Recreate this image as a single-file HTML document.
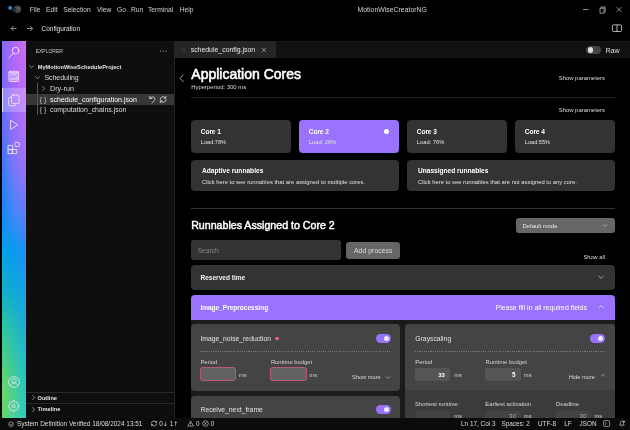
<!DOCTYPE html>
<html><head><meta charset="utf-8"><title>MotionWiseCreatorNG</title>
<style>
html,body{margin:0;padding:0;background:#000;}
body{width:630px;height:430px;position:relative;overflow:hidden;will-change:transform;font-family:"Liberation Sans",sans-serif;}
.b{position:absolute;display:block;}
.ar{font-family:'DejaVu Sans',sans-serif;font-size:0.95em;}
.t{position:absolute;white-space:nowrap;line-height:1;transform-origin:0 50%;}
</style></head><body>
<div class="b" style="left:0.00px;top:0.00px;width:630.00px;height:430.00px;background:#000;"></div>
<div class="b" style="left:25.50px;top:40.60px;width:148.50px;height:377.40px;background:#0e0e0e;"></div>
<div class="b" style="left:174.00px;top:40.60px;width:1.00px;height:377.40px;background:#232323;"></div>
<div class="b" style="left:175.00px;top:40.60px;width:455.00px;height:17.90px;background:#111;box-shadow:inset 0 0.6px 0 #1c1c1c, inset 0 -0.6px 0 #1c1c1c;"></div>
<div class="b" style="left:175.00px;top:40.60px;width:100.70px;height:17.90px;background:#262626;"></div>
<div class="b" style="left:2.00px;top:40.60px;width:23.50px;height:377.10px;background:linear-gradient(180deg,#ac68f4 0.1%,#b068fa 6.5%,#9070f8 25.3%,#7a78f8 33.8%,#4a86fa 44.4%,#0a98f0 55.5%,#10a8d8 66.1%,#28bcb8 76.7%,#3cc8a0 86.0%,#48d090 93.7%,#48d098 99.8%);"></div>
<div class="b" style="left:2.00px;top:40.60px;width:23.50px;height:377.10px;background:linear-gradient(180deg,#d06cf2 0.1%,#c86af8 6.5%,#b070ff 25.3%,#9a70ff 33.8%,#6a78ff 44.4%,#2090f8 55.5%,#18a0e8 66.1%,#1cb0d4 76.7%,#20c0c8 86.0%,#2cc8c0 93.7%,#2cccc0 99.8%);-webkit-mask-image:linear-gradient(90deg,transparent 50%,#000 96%);mask-image:linear-gradient(90deg,transparent 50%,#000 96%);"></div>
<div class="b" style="left:2.00px;top:40.60px;width:23.50px;height:377.10px;background:linear-gradient(180deg,#8868f8 0.1%,#8868fa 6.5%,#5a70f8 25.3%,#3a7cf8 33.8%,#1a84f4 44.4%,#02a0e8 55.5%,#12b0c8 66.1%,#30c49c 76.7%,#54d07c 86.0%,#68d868 93.7%,#60d868 99.8%);-webkit-mask-image:linear-gradient(90deg,#000 6%,transparent 50%);mask-image:linear-gradient(90deg,#000 6%,transparent 50%);"></div>
<div class="b" style="left:2.00px;top:88.20px;width:23.50px;height:23.60px;background:rgba(255,255,255,0.22);"></div>
<div class="b" style="left:2.00px;top:88.20px;width:1.00px;height:23.80px;background:rgba(255,255,255,0.7);"></div>
<svg class="b" style="left:7px;top:4px" width="16" height="12" viewBox="0 0 16 12"><circle cx="10.4" cy="5.2" r="3.7" fill="#46474d"/><circle cx="7.4" cy="5.9" r="2.1" fill="#2c2c32"/><circle cx="11.4" cy="4.2" r="1.8" fill="#55565c"/><circle cx="3.2" cy="3.9" r="1.9" fill="#2f8fe4"/></svg>
<span class="t" style="left:29.80px;top:7px;font-size:6.7px;color:#d0d0d0;">File</span>
<span class="t" style="left:46.00px;top:7px;font-size:6.7px;color:#d0d0d0;">Edit</span>
<span class="t" style="left:63.20px;top:7px;font-size:6.7px;color:#d0d0d0;">Selection</span>
<span class="t" style="left:97.00px;top:7px;font-size:6.7px;color:#d0d0d0;">View</span>
<span class="t" style="left:117.00px;top:7px;font-size:6.7px;color:#d0d0d0;">Go</span>
<span class="t" style="left:131.00px;top:7px;font-size:6.7px;color:#d0d0d0;">Run</span>
<span class="t" style="left:148.00px;top:7px;font-size:6.7px;color:#d0d0d0;">Terminal</span>
<span class="t" style="left:179.70px;top:7px;font-size:6.7px;color:#d0d0d0;">Help</span>
<span class="t" style="left:357.50px;top:7px;font-size:6.91px;color:#d0d0d0;">MotionWiseCreatorNG</span>
<svg class="b" style="left:580px;top:4px" width="46" height="12" viewBox="0 0 46 12" fill="none" stroke="#ccc" stroke-width="0.7"><path d="M3 5.5h5.6"/><path d="M20 4.2h4v5h-4z"/><path d="M21.2 4.2v-1.2h4v5h-1.2"/><path d="M36.7 3.2l4.6 4.6M41.3 3.2l-4.6 4.6"/></svg>
<svg class="b" style="left:10px;top:24px" width="26" height="9" viewBox="0 0 26 9" fill="none" stroke="#ccc" stroke-width="0.7"><path d="M6.5 4.5h-5.3M3.6 2l-2.5 2.5 2.5 2.5"/><path d="M17 4.5h5.6M20.2 2l2.5 2.5-2.5 2.5"/></svg>
<span class="t" style="left:41.60px;top:26px;font-size:6.46px;color:#e0e0e0;">Configuration</span>
<svg class="b" style="left:611px;top:24px" width="12" height="9" viewBox="0 0 12 9" fill="none" stroke="#ddd" stroke-width="0.8"><rect x="1.4" y="0.9" width="9.2" height="6.6" rx="1"/><path d="M6 0.9v6.6"/></svg>
<svg class="b" style="left:2px;top:41px" width="24" height="120" viewBox="0 0 24 120" fill="none" stroke="#f3e6ff" stroke-width="0.85" stroke-linejoin="round" stroke-linecap="round"><circle cx="13.6" cy="9.6" r="3.4"/><path d="M11.2 12.1L6.8 17"/><rect x="6.9" y="30.3" width="9.8" height="10.2" rx="0.8"/><path d="M8.4 34.6l2-1.6 1.8 1.4 2.8-2.2M8.9 38.8v-1.6M10.9 38.8v-2.4M12.9 38.8v-1.8M14.9 38.8v-3.4M6.9 31.8h9.8" stroke-width="0.8"/><rect x="7.6" y="31" width="8.4" height="8.8" fill="rgba(255,255,255,0.28)" stroke="none"/><rect x="9.6" y="54" width="7.4" height="8.6" rx="1.2"/><path d="M9.6 56.4h-1.8a1.2 1.2 0 0 0-1.2 1.2v6a1.2 1.2 0 0 0 1.2 1.2h4.6a1.2 1.2 0 0 0 1.2-1.2v-1"/><path d="M8.6 79.6v8.8l7-4.4z"/><path d="M6.4 104.4h4.2v4.2h-4.2zM6.4 108.6h4.2v4h-4.2zM10.6 108.6h4.2v4h-4.2z"/><rect x="13" y="101.4" width="4.2" height="4.2" rx="0.5"/></svg>
<svg class="b" style="left:2px;top:376px" width="24" height="42" viewBox="0 0 24 42" fill="none" stroke="#f3e6ff" stroke-width="0.75" stroke-linejoin="round"><circle cx="12" cy="6" r="5.4"/><circle cx="12" cy="4.6" r="2.1"/><path d="M8.3 9.9c.5-2 2-2.9 3.7-2.9s3.2.9 3.7 2.9"/><path d="M15.78 29.02L17.15 29.27L17.15 30.73L15.78 30.98L15.28 32.19L16.07 33.34L15.04 34.37L13.89 33.58L12.68 34.08L12.43 35.45L10.97 35.45L10.72 34.08L9.51 33.58L8.36 34.37L7.33 33.34L8.12 32.19L7.62 30.98L6.25 30.73L6.25 29.27L7.62 29.02L8.12 27.81L7.33 26.66L8.36 25.63L9.51 26.42L10.72 25.92L10.97 24.55L12.43 24.55L12.68 25.92L13.89 26.42L15.04 25.63L16.07 26.66L15.28 27.81z"/><circle cx="11.7" cy="30" r="1.6"/></svg>
<span class="t" style="left:35.70px;top:49px;font-size:5.01px;color:#ccc;">EXPLORER</span>
<svg class="b" style="left:158.9px;top:49px" width="10" height="4" viewBox="0 0 10 4" fill="#ccc"><circle cx="1.5" cy="2" r="0.6"/><circle cx="4.3" cy="2" r="0.6"/><circle cx="7.1" cy="2" r="0.6"/></svg>
<div class="b" style="left:25.50px;top:94.00px;width:148.50px;height:10.70px;background:#373737;"></div>
<svg class="b" style="left:29.1px;top:64.4px" width="5" height="5" viewBox="0 0 5 5" fill="none" stroke="#bbb" stroke-width="0.7"><path d="M0.2 1.4l2.3 2.3 2.3-2.3"/></svg>
<span class="t" style="left:37.70px;top:65px;font-size:5.65px;color:#e4e4e4;font-weight:bold;">MyMotionWiseScheduleProject</span>
<svg class="b" style="left:34.9px;top:75.3px" width="5" height="5" viewBox="0 0 5 5" fill="none" stroke="#bbb" stroke-width="0.7"><path d="M0.2 1.4l2.3 2.3 2.3-2.3"/></svg>
<span class="t" style="left:44.40px;top:75px;font-size:6.93px;color:#ddd;">Scheduling</span>
<div class="b" style="left:37.00px;top:82.50px;width:0.50px;height:32.50px;background:#555;"></div>
<svg class="b" style="left:40.7px;top:86.1px" width="5" height="5" viewBox="0 0 5 5" fill="none" stroke="#bbb" stroke-width="0.7"><path d="M1.4 0.2l2.3 2.3-2.3 2.3"/></svg>
<span class="t" style="left:50.00px;top:85px;font-size:7.2px;color:#ddd;">Dry-run</span>
<span class="t" style="left:39.80px;top:97px;font-size:6.77px;color:#ccc;">{ }</span>
<span class="t" style="left:50.00px;top:96px;font-size:7.0px;color:#fff;">schedule_configuration.json</span>
<span class="t" style="left:39.80px;top:107px;font-size:6.77px;color:#ccc;">{ }</span>
<span class="t" style="left:50.00px;top:107px;font-size:6.95px;color:#ddd;">computation_chains.json</span>
<svg class="b" style="left:148px;top:95px" width="22" height="9" viewBox="0 0 22 9" fill="none" stroke="#e4e4e4" stroke-width="0.75" stroke-linecap="round" stroke-linejoin="round"><path d="M1.8 1.3v2.2h2.2"/><path d="M1.9 3.4c1-2 4.8-2.3 5.1.4.2 1.7-1.7 2.3-2.9 4.1"/><path d="M12.1 4.5a3 3 0 0 1 5.5-1.5M18.1 4.5a3 3 0 0 1-5.5 1.5"/><path d="M17.9 1.2v1.9h-1.9M12.3 7.8v-1.9h1.9"/></svg>
<div class="b" style="left:25.50px;top:392.00px;width:148.50px;height:0.50px;background:#2a2a2a;"></div>
<div class="b" style="left:25.50px;top:403.00px;width:148.50px;height:0.50px;background:#2a2a2a;"></div>
<svg class="b" style="left:30.5px;top:395.3px" width="5" height="5" viewBox="0 0 5 5" fill="none" stroke="#bbb" stroke-width="0.7"><path d="M1.4 0.2l2.3 2.3-2.3 2.3"/></svg>
<span class="t" style="left:37.50px;top:396px;font-size:5.66px;color:#e4e4e4;font-weight:bold;">Outline</span>
<svg class="b" style="left:30.5px;top:406.5px" width="5" height="5" viewBox="0 0 5 5" fill="none" stroke="#bbb" stroke-width="0.7"><path d="M1.4 0.2l2.3 2.3-2.3 2.3"/></svg>
<span class="t" style="left:37.50px;top:407px;font-size:5.7px;color:#e4e4e4;font-weight:bold;">Timeline</span>
<svg class="b" style="left:182px;top:47px" width="4" height="6" viewBox="0 0 4 6" fill="#3a3a3a"><rect x="0.5" y="0.5" width="0.8" height="5"/><rect x="2.4" y="0.5" width="0.8" height="5"/></svg>
<span class="t" style="left:190.70px;top:47px;font-size:6.91px;color:#e8e8e8;">schedule_config.json</span>
<svg class="b" style="left:261px;top:47.3px" width="6" height="6" viewBox="0 0 6 6" fill="none" stroke="#ccc" stroke-width="0.6"><path d="M0.9 0.9l4 4M4.9 0.9l-4 4"/></svg>
<div class="b" style="left:586.30px;top:46.00px;width:14.70px;height:8.40px;background:#444;border-radius:4.2px;"></div>
<div class="b" style="left:587.50px;top:47.30px;width:5.80px;height:5.80px;background:#ddd;border-radius:3px;"></div>
<span class="t" style="left:605.40px;top:48px;font-size:7.15px;color:#ddd;">Raw</span>
<svg class="b" style="left:178px;top:73px" width="8" height="10" viewBox="0 0 8 10" fill="none" stroke="#ccc" stroke-width="0.8"><path d="M5.6 1.6L2 5.3l3.6 3.7"/></svg>
<span class="t" style="left:191.30px;top:67px;font-size:14.0px;color:#fff;-webkit-text-stroke:0.55px #fff;">Application Cores</span>
<span class="t" style="left:191.30px;top:85px;font-size:5.91px;color:#ddd;">Hyperperiod: 300 ms</span>
<span class="t" style="left:558.70px;top:76px;font-size:5.91px;color:#ddd;">Show parameters</span>
<div class="b" style="left:191.00px;top:97.20px;width:424.00px;height:0.80px;background:#222;"></div>
<span class="t" style="left:558.70px;top:108px;font-size:5.91px;color:#ddd;">Show parameters</span>
<div class="b" style="left:191.00px;top:120.00px;width:100.00px;height:32.60px;background:#333;border-radius:4px;"></div>
<span class="t" style="left:200.80px;top:129px;font-size:6.6px;color:#fff;font-weight:bold;letter-spacing:-0.1px;">Core 1</span>
<span class="t" style="left:200.80px;top:140px;font-size:5.62px;color:#e0e0e0;">Load:78%</span>
<div class="b" style="left:299.00px;top:120.00px;width:100.00px;height:32.60px;background:#9a73fc;border-radius:4px;"></div>
<span class="t" style="left:308.80px;top:129px;font-size:6.6px;color:#fff;font-weight:bold;letter-spacing:-0.1px;">Core 2</span>
<span class="t" style="left:308.80px;top:140px;font-size:5.75px;color:#e0e0e0;">Load: 28%</span>
<div class="b" style="left:407.00px;top:120.00px;width:100.00px;height:32.60px;background:#333;border-radius:4px;"></div>
<span class="t" style="left:416.80px;top:129px;font-size:6.6px;color:#fff;font-weight:bold;letter-spacing:-0.1px;">Core 3</span>
<span class="t" style="left:416.80px;top:140px;font-size:5.75px;color:#e0e0e0;">Load: 76%</span>
<div class="b" style="left:515.00px;top:120.00px;width:100.00px;height:32.60px;background:#333;border-radius:4px;"></div>
<span class="t" style="left:524.80px;top:129px;font-size:6.6px;color:#fff;font-weight:bold;letter-spacing:-0.1px;">Core 4</span>
<span class="t" style="left:524.80px;top:140px;font-size:5.62px;color:#e0e0e0;">Load:55%</span>
<div class="b" style="left:384.00px;top:128.70px;width:5.20px;height:5.20px;background:#fff;border-radius:2.6px;"></div>
<div class="b" style="left:191.00px;top:160.00px;width:208.00px;height:30.50px;background:#333;border-radius:4px;"></div>
<div class="b" style="left:407.00px;top:160.00px;width:208.00px;height:30.50px;background:#333;border-radius:4px;"></div>
<span class="t" style="left:202.00px;top:168px;font-size:6.61px;color:#fff;font-weight:bold;">Adaptive runnables</span>
<span class="t" style="left:202.00px;top:180px;font-size:5.85px;color:#e0e0e0;">Click here to see runnables that are assigned to multiple cores.</span>
<span class="t" style="left:418.00px;top:168px;font-size:6.57px;color:#fff;font-weight:bold;">Unassigned runnables</span>
<span class="t" style="left:418.00px;top:180px;font-size:5.84px;color:#e0e0e0;">Click here to see runnables that are not assigned to any core.</span>
<div class="b" style="left:191.00px;top:207.50px;width:424.00px;height:0.70px;background:#333;"></div>
<span class="t" style="left:191.20px;top:220px;font-size:10.63px;color:#fff;-webkit-text-stroke:0.45px #fff;">Runnables Assigned to Core 2</span>
<div class="b" style="left:515.60px;top:218.00px;width:99.40px;height:14.80px;background:#666;border-radius:3px;"></div>
<span class="t" style="left:522.50px;top:224px;font-size:5.88px;color:#e8e8e8;">Default mode</span>
<svg class="b" style="left:602.2px;top:223px" width="6" height="5" viewBox="0 0 6 5" fill="none" stroke="#ccc" stroke-width="0.6"><path d="M1 1.4l2 2 2-2"/></svg>
<div class="b" style="left:191.00px;top:240.20px;width:150.00px;height:19.80px;background:#333;border-radius:3px;"></div>
<span class="t" style="left:197.70px;top:248px;font-size:6.6px;color:#858585;">Search</span>
<div class="b" style="left:346.40px;top:241.70px;width:53.60px;height:17.30px;background:#666;border-radius:3px;"></div>
<span class="t" style="left:354.00px;top:248px;font-size:6.93px;color:#ddd;">Add process</span>
<span class="t" style="left:583.50px;top:255px;font-size:5.7px;color:#ddd;">Show all</span>
<div class="b" style="left:191.00px;top:265.00px;width:424.00px;height:24.60px;background:#333;border-radius:4px;"></div>
<span class="t" style="left:200.40px;top:275px;font-size:6.57px;color:#f0f0f0;font-weight:bold;">Reserved time</span>
<svg class="b" style="left:597px;top:274px" width="8" height="6" viewBox="0 0 8 6" fill="none" stroke="#ccc" stroke-width="0.7"><path d="M1.4 1.8l2.6 2.6 2.6-2.6"/></svg>
<div class="b" style="left:191.00px;top:295.00px;width:424.00px;height:123.00px;background:#1b1b1d;border-radius:4px;"></div>
<div class="b" style="left:191.00px;top:295.00px;width:424.00px;height:25.00px;background:#9a73fc;border-radius:4px 4px 0 0;"></div>
<span class="t" style="left:200.40px;top:305px;font-size:6.52px;color:#fff;font-weight:bold;">Image_Preprocessing</span>
<span class="t" style="left:495.50px;top:305px;font-size:6.95px;color:#fff;">Please fill in all required fields</span>
<svg class="b" style="left:597px;top:304px" width="8" height="6" viewBox="0 0 8 6" fill="none" stroke="#eee" stroke-width="0.7"><path d="M1.4 4.2l2.6-2.6 2.6 2.6"/></svg>
<div class="b" style="left:191.00px;top:324.00px;width:209.00px;height:66.60px;background:#444444;border-radius:4px;"></div>
<span class="t" style="left:200.40px;top:336px;font-size:6.8px;color:#e2e2e2;">Image_noise_reduction</span>
<div class="b" style="left:275.30px;top:336.50px;width:3.60px;height:3.60px;background:#f0608a;border-radius:2px;"></div>
<div class="b" style="left:375.80px;top:334.00px;width:15.20px;height:9.20px;background:#9a73fc;border-radius:4.6px;"></div>
<div class="b" style="left:383.70px;top:335.90px;width:5.40px;height:5.40px;background:#f0e8ff;border-radius:2.7px;"></div>
<div class="b" style="left:200.4px;top:350.9px;width:189.6px;height:0.8px;background:repeating-linear-gradient(90deg,#7c7c7c 0 1.1px,transparent 1.1px 2.2px)"></div>
<span class="t" style="left:200.40px;top:360px;font-size:5.85px;color:#d4d4d4;">Period</span>
<span class="t" style="left:270.90px;top:360px;font-size:5.85px;color:#d4d4d4;">Runtime budget</span>
<div class="b" style="left:200.00px;top:367.30px;width:36.40px;height:13.90px;background:#626262;border-radius:2.5px;box-sizing:border-box;border:0.8px solid #bb5a6e;"></div>
<span class="t" style="left:238.90px;top:373px;font-size:5.85px;color:#ccc;">ms</span>
<div class="b" style="left:270.00px;top:367.30px;width:36.70px;height:13.90px;background:#626262;border-radius:2.5px;box-sizing:border-box;border:0.8px solid #bb5a6e;"></div>
<span class="t" style="left:309.30px;top:373px;font-size:5.85px;color:#ccc;">ms</span>
<span class="t" style="left:352.00px;top:375px;font-size:5.7px;color:#d8d8d8;">Show more</span>
<svg class="b" style="left:385px;top:375px" width="6" height="5" viewBox="0 0 6 5" fill="none" stroke="#ccc" stroke-width="0.6"><path d="M1 1.4l2 2 2-2"/></svg>
<div class="b" style="left:191.00px;top:396.00px;width:209.00px;height:22.00px;background:#444444;border-radius:4px 4px 0 0;"></div>
<span class="t" style="left:200.50px;top:407px;font-size:6.8px;color:#e2e2e2;">Receive_next_frame</span>
<div class="b" style="left:375.70px;top:405.10px;width:15.20px;height:9.20px;background:#9a73fc;border-radius:4.6px;"></div>
<div class="b" style="left:383.60px;top:407.00px;width:5.40px;height:5.40px;background:#f0e8ff;border-radius:2.7px;"></div>
<div class="b" style="left:404.80px;top:324.00px;width:210.20px;height:94.00px;background:#3b3b3b;border-radius:4px 4px 0 0;"></div>
<div class="b" style="left:404.80px;top:324.00px;width:210.20px;height:66.40px;background:#444444;border-radius:4px 4px 0 0;"></div>
<span class="t" style="left:415.30px;top:336px;font-size:6.8px;color:#e2e2e2;">Grayscaling</span>
<div class="b" style="left:589.80px;top:334.00px;width:15.20px;height:9.20px;background:#9a73fc;border-radius:4.6px;"></div>
<div class="b" style="left:597.70px;top:335.90px;width:5.40px;height:5.40px;background:#f0e8ff;border-radius:2.7px;"></div>
<div class="b" style="left:415.3px;top:350.9px;width:189.3px;height:0.8px;background:repeating-linear-gradient(90deg,#7c7c7c 0 1.1px,transparent 1.1px 2.2px)"></div>
<span class="t" style="left:415.30px;top:360px;font-size:5.85px;color:#d4d4d4;">Period</span>
<span class="t" style="left:485.60px;top:360px;font-size:5.85px;color:#d4d4d4;">Runtime budget</span>
<div class="b" style="left:415.00px;top:367.50px;width:35.40px;height:13.50px;background:#555;border-radius:2.5px;"></div>
<span class="t" style="left:438.20px;top:372px;font-size:6.02px;color:#fff;font-weight:bold;">33</span>
<span class="t" style="left:454.20px;top:373px;font-size:5.85px;color:#ccc;">ms</span>
<div class="b" style="left:485.30px;top:367.50px;width:35.60px;height:13.50px;background:#555;border-radius:2.5px;"></div>
<span class="t" style="left:512.00px;top:372px;font-size:6.29px;color:#fff;font-weight:bold;">5</span>
<span class="t" style="left:523.80px;top:373px;font-size:5.85px;color:#ccc;">ms</span>
<span class="t" style="left:568.80px;top:375px;font-size:5.7px;color:#d8d8d8;">Hide more</span>
<svg class="b" style="left:599.6px;top:372.6px" width="6" height="5" viewBox="0 0 6 5" fill="none" stroke="#ccc" stroke-width="0.6"><path d="M1 3.4l2-2 2 2"/></svg>
<span class="t" style="left:415.00px;top:402px;font-size:5.85px;color:#d4d4d4;">Shortest runtime</span>
<span class="t" style="left:485.30px;top:402px;font-size:5.85px;color:#d4d4d4;">Earliest activation</span>
<span class="t" style="left:556.00px;top:402px;font-size:5.85px;color:#d4d4d4;">Deadline</span>
<div class="b" style="left:415.00px;top:410.60px;width:35.40px;height:13.40px;background:#444;border-radius:2.5px;"></div>
<div class="b" style="left:485.30px;top:410.60px;width:35.60px;height:13.40px;background:#444;border-radius:2.5px;"></div>
<div class="b" style="left:556.00px;top:410.60px;width:35.30px;height:13.40px;background:#444;border-radius:2.5px;"></div>
<span class="t" style="left:454.20px;top:414px;font-size:5.85px;color:#ccc;">ms</span>
<span class="t" style="left:509.00px;top:413px;font-size:6.1px;color:#a8a8a8;">30</span>
<span class="t" style="left:523.80px;top:414px;font-size:5.85px;color:#ccc;">ms</span>
<span class="t" style="left:579.50px;top:413px;font-size:6.1px;color:#a8a8a8;">30</span>
<span class="t" style="left:594.40px;top:414px;font-size:5.85px;color:#ccc;">ms</span>
<div class="b" style="left:0.00px;top:417.70px;width:630.00px;height:12.30px;background:#0b0b0b;"></div>
<svg class="b" style="left:8.3px;top:420.5px" width="7" height="7" viewBox="0 0 7 7" fill="none" stroke="#ddd" stroke-width="0.6"><circle cx="3.1" cy="3.2" r="2.3"/><path d="M2.1 3.3l.8.8 1.3-1.5"/></svg>
<span class="t" style="left:16.90px;top:421px;font-size:6.46px;color:#ddd;">System Definition Verified 18/08/2024 13:51</span>
<svg class="b" style="left:150px;top:420.2px" width="8" height="7" viewBox="0 0 8 7" fill="none" stroke="#ddd" stroke-width="0.65"><path d="M1.3 3.5a2.7 2.7 0 0 1 5-1.2M6.7 3.5a2.7 2.7 0 0 1-5 1.2"/><path d="M6.5 0.8v1.6h-1.6M1.5 6.2v-1.6h1.6"/></svg>
<span class="t" style="left:159.30px;top:421px;font-size:6.4px;color:#ddd;">0<span class="ar">↓</span> 1<span class="ar">↑</span></span>
<svg class="b" style="left:187px;top:420.2px" width="24" height="7" viewBox="0 0 24 7" fill="none" stroke="#ddd" stroke-width="0.6"><path d="M3.6 0.9l2.9 5.2h-5.8z"/><path d="M3.6 2.6v1.8M3.6 4.9v.5"/><circle cx="18.5" cy="3.5" r="2.8"/><path d="M17.2 2.2l2.6 2.6M19.8 2.2l-2.6 2.6"/></svg>
<span class="t" style="left:196.00px;top:421px;font-size:6.4px;color:#ddd;">0</span>
<span class="t" style="left:210.70px;top:421px;font-size:6.4px;color:#ddd;">0</span>
<span class="t" style="left:461.00px;top:421px;font-size:6.4px;color:#ddd;">Ln 17, Col 3</span>
<span class="t" style="left:501.50px;top:421px;font-size:6.4px;color:#ddd;">Spaces: 2</span>
<span class="t" style="left:537.90px;top:421px;font-size:6.4px;color:#ddd;">UTF-8</span>
<span class="t" style="left:564.20px;top:421px;font-size:6.4px;color:#ddd;">LF</span>
<span class="t" style="left:579.60px;top:421px;font-size:6.4px;color:#ddd;">JSON</span>
<svg class="b" style="left:603px;top:420.3px" width="23" height="7" viewBox="0 0 23 7" fill="none" stroke="#ddd" stroke-width="0.6"><rect x="0.6" y="0.6" width="6" height="5.8" rx="0.8"/><path d="M2 2.3l1.3 1.2-1.3 1.2"/><path d="M16.6 5.1h4.6c-.7-.6-.8-1.2-.8-2.4 0-1-.6-1.7-1.5-1.7s-1.5.7-1.5 1.7c0 1.2-.1 1.8-.8 2.4zM18.4 5.9h1"/><circle cx="21" cy="1.6" r="0.9" fill="#ddd" stroke="none"/></svg>
</body></html>
